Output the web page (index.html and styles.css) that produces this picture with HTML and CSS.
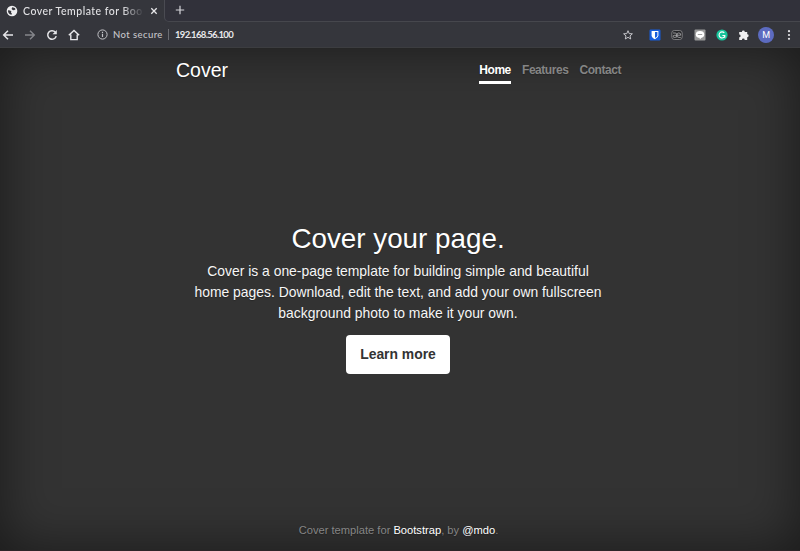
FILE: index.html
```html
<!DOCTYPE html>
<html lang="en">
<head>
<meta charset="utf-8">
<title>Cover Template for Bootstrap</title>
<link rel="stylesheet" href="styles.css">
</head>
<body>
<div class="tabs">
  <div class="tab">
    <svg class="globe" width="12" height="12" viewBox="0 0 12 12"><circle cx="6" cy="6" r="5.3" fill="#eeeef0"/><path d="M2 5.2 4.2 5.4 5.4 6.6 5 7.8 6 8.8 5.4 9.7C3.2 9.2 1.8 7.6 2 5.2ZM6.2 2.2 8.8 2.9 9.6 4.2 8 5.2 6.6 5 5.6 3.9Z" fill="#35363c"/></svg>
    <span class="tab-title">Cover Template for Boo</span>
    <svg class="close" width="8" height="8" viewBox="0 0 8 8"><path d="M1.3 1.3 6.7 6.7M6.7 1.3 1.3 6.7" stroke="#e8e8ea" stroke-width="1.3"/></svg>
  </div>
  <div class="strip"><svg width="10" height="10" viewBox="0 0 10 10"><path d="M5 .8V9.2M.8 5H9.2" stroke="#d6d6da" stroke-width="1.2"/></svg></div>
</div>
<div class="toolbar">
  <div class="navicons">
    <svg width="12" height="12" viewBox="0 0 12 12" fill="none" stroke="#e6e6e9" stroke-width="1.5"><path d="M11 6H2M6 1.7 1.7 6 6 10.3"/></svg>
    <svg width="12" height="12" viewBox="0 0 12 12" fill="none" stroke="#85868b" stroke-width="1.4"><path d="M1 6H10M6 1.7 10.3 6 6 10.3"/></svg>
    <svg width="12" height="12" viewBox="0 0 12 12"><path d="M9.3 3.1A4.3 4.3 0 1 0 10.2 7.1" fill="none" stroke="#e6e6e9" stroke-width="1.5"/><path d="M10.8 1V5.3H6.5Z" fill="#e6e6e9"/></svg>
    <svg width="12" height="12" viewBox="0 0 12 12"><path d="M2.8 5.5V10.6H9.2V5.5M.8 6.3 6 1.4 11.2 6.3" fill="none" stroke="#e6e6e9" stroke-width="1.4"/></svg>
  </div>
  <svg class="info" width="11" height="11" viewBox="0 0 11 11"><circle cx="5.5" cy="5.5" r="4.6" fill="none" stroke="#c2c3c7"/><path d="M5.5 4.8V8M5.5 2.8V3.9" stroke="#c2c3c7" stroke-width="1.2"/></svg>
  <span class="secure">Not secure</span>
  <span class="url">192.168.56.100</span>
  <div class="extensions">
    <svg width="12" height="12" viewBox="0 0 12 12"><path d="M6 1.7 7.2 4.6 10.4 4.8 8 6.9 8.7 10 6 8.3 3.3 10 4 6.9 1.6 4.8 4.8 4.6Z" fill="none" stroke="#c4c4c9" stroke-width="1"/></svg>
    <svg width="12" height="12" viewBox="0 0 12 12"><rect x=".5" y=".5" width="11" height="11" rx="1.2" fill="#175ddc"/><path d="M2.6 2H9.4V6.2Q9.4 8.6 6 10.3 2.6 8.6 2.6 6.2Z" fill="#fff"/><path d="M6 3H8.4V6.2Q8.4 7.7 6 9.1Z" fill="#175ddc"/></svg>
    <svg width="12" height="12" viewBox="0 0 12 12"><rect x=".8" y="1.5" width="10.4" height="9" rx="2.5" fill="#242528" stroke="#8e8e91" stroke-width=".8"/><path d="M2 4H4.2Q5.7 4 5.7 5.5V8.3M5.7 6.3H3.2Q1.8 6.5 2.1 7.8 2.5 9 5.5 8M5.8 6.2H9.8Q9.9 3.9 7.8 3.9 5.8 3.9 5.8 6.2 5.8 8.4 8 8.4H9.8" fill="none" stroke="#b0b0b2" stroke-width=".8"/></svg>
    <svg width="12" height="12" viewBox="0 0 12 12"><rect x=".5" y=".5" width="11" height="11" rx="1" fill="#999"/><ellipse cx="6" cy="5.4" rx="4.2" ry="3.4" fill="#fff"/><path d="M5.2 8.3H7.8L6 10.3Z" fill="#fff"/><path d="M3.8 5.5H8.2" stroke="#999" stroke-width=".9"/></svg>
    <svg width="12" height="12" viewBox="0 0 12 12"><circle cx="6" cy="6" r="5.6" fill="#15c39a"/><path d="M8.3 3.9A3 3 0 1 0 8.8 7.2M6.4 6.5H8.8V8.7" fill="none" stroke="#fff" stroke-width="1.1"/></svg>
    <svg width="12" height="12" viewBox="0 0 12 12"><path d="M1.2 3H3.9A1.45 1.45 0 1 1 6.8 3H9.2V5.3A1.45 1.45 0 1 1 9.2 8.2V10.9H6.7A1.4 1.4 0 0 0 3.9 10.9H1.2V8.3A1.4 1.4 0 0 0 1.2 5.5Z" fill="#f0f0f2"/></svg>
    <span class="avatar">M</span>
    <svg class="more" width="4" height="12" viewBox="0 0 4 12" fill="#e6e6e9"><circle cx="2" cy="2.2" r="1.1"/><circle cx="2" cy="6" r="1.1"/><circle cx="2" cy="9.8" r="1.1"/></svg>
  </div>
</div>
<div class="page">
  <div class="container">
    <header>
      <h3>Cover</h3>
      <nav><a class="active">Home</a><a>Features</a><a>Contact</a></nav>
    </header>
    <main>
      <h1>Cover your page.</h1>
      <p>Cover is a one-page template for building simple and beautiful<br>home pages. Download, edit the text, and add your own fullscreen<br>background photo to make it your own.</p>
      <a class="button">Learn more</a>
    </main>
    <footer>Cover template for <a>Bootstrap</a>, by <a>@mdo</a>.</footer>
  </div>
</div>
</body>
</html>
```
FILE: styles.css
```css
* { box-sizing: border-box; }
body {
  margin: 0;
  width: 800px;
  height: 551px;
  overflow: hidden;
  display: flex;
  flex-direction: column;
  background: #333;
  color: #fff;
  font-family: "Liberation Sans", Arial, sans-serif;
}
svg { display: block; flex: none; }
.tabs { display: flex; height: 22px; background: #35363c; }
.tab { display: flex; align-items: center; width: 164px; padding: 0 6px; }
.tab-title {
  width: 121px;
  margin: 0 6px 0 5px;
  white-space: nowrap;
  font: 500 10.5px/20px Lato, sans-serif;
  letter-spacing: .5px;
  color: #e2e2e5;
  -webkit-mask-image: linear-gradient(90deg, #000 82%, transparent);
  mask-image: linear-gradient(90deg, #000 82%, transparent);
}
.globe, .close { margin-top: -1px; }
.strip {
  flex: 1;
  padding: 5px 0 0 10px;
  background: #31313a;
  border-left: 1px solid #4a4b52;
  border-bottom: 1px solid #46474d;
  border-bottom-left-radius: 5px;
}
.toolbar {
  display: flex;
  align-items: center;
  height: 26px;
  padding: 0 9px 0 2px;
  background: #35363c;
  border-bottom: 1px solid #3c3d40;
}
.navicons { display: flex; gap: 10px; margin-right: 16.5px; }
.info { margin-right: 5.5px; }
.secure {
  width: 55px;
  white-space: nowrap;
  font: 500 9.5px/12px Lato, sans-serif;
  letter-spacing: .42px;
  color: #c5c5c9;
}
.url {
  padding-left: 6px;
  border-left: 1px solid #6b6c72;
  white-space: nowrap;
  font: 700 9.5px/11px Lato, sans-serif;
  letter-spacing: -.67px;
  color: #e8e8eb;
}
.extensions { display: flex; align-items: center; gap: 10.2px; margin-left: auto; }
.extensions svg:first-child { margin-right: 5.5px; }
.extensions .avatar { margin: 0 1.7px 0 -2px; }
.extensions .more { margin-left: 1px; }
.avatar {
  width: 16px;
  height: 16px;
  border-radius: 50%;
  background: #5c6bc0;
  text-align: center;
  font: 9px/16px Roboto, sans-serif;
}
.page {
  flex: 1;
  display: flex;
  justify-content: center;
  padding-right: 3px;
  box-shadow: inset 0 0 52px rgba(0, 0, 0, .5);
  border-bottom: 1px solid #2d2528;
  text-shadow: 0 .6px 1.1px rgba(0, 0, 0, .25);
}
.container {
  display: flex;
  flex-direction: column;
  justify-content: space-between;
  width: 445px;
  padding: 11px 0;
  text-align: center;
}
header { display: flex; justify-content: space-between; }
h1, h3, p { margin: 0; font-weight: 400; }
h3 { font-size: 19.5px; line-height: 23px; }
nav { display: flex; gap: 11.2px; font-weight: 700; font-size: 12px; letter-spacing: -.46px; line-height: 16px; color: #858585; }
nav a { height: 25px; padding-top: 3px; border-bottom: 3px solid transparent; }
nav .active { color: #fff; border-color: #fff; }
main { padding: 0 1px 11px 0; }
h1 { margin-bottom: 5px; font-size: 27.8px; line-height: 34px; }
p { margin: 0 -11px 11px; font-size: 13.9px; line-height: 21px; white-space: nowrap; color: #f6f6f6; }
.button {
  display: inline-block;
  width: 104px;
  height: 39px;
  border-radius: 4px;
  background: #fff;
  color: #333;
  font-size: 13.9px;
  font-weight: 700;
  line-height: 39px;
  text-shadow: none;
}
footer { font-size: 11.15px; line-height: 17px; color: #858585; }
footer a { color: #fff; }
```
